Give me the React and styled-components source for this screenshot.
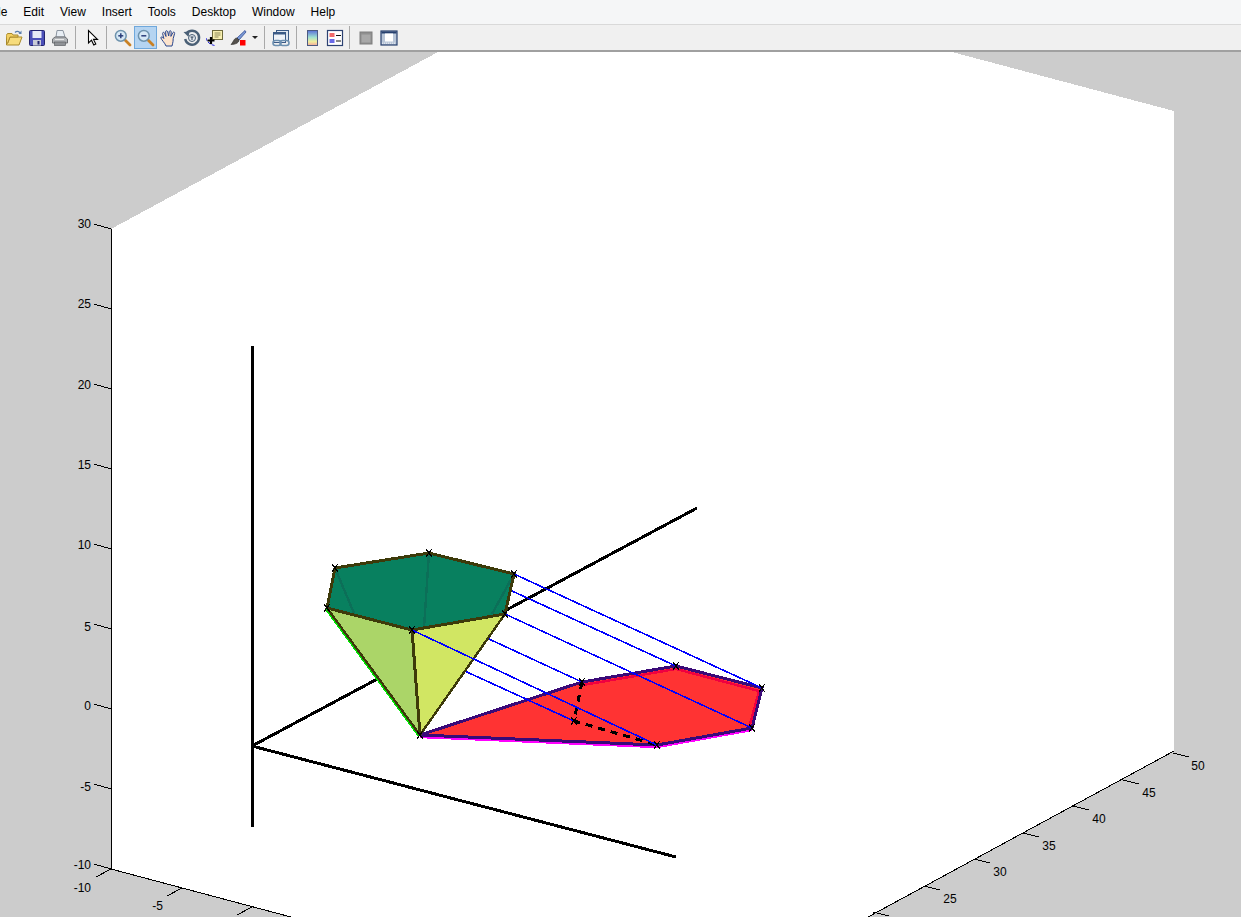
import React from 'react';
import styled, { createGlobalStyle } from 'styled-components';

const GlobalStyle = createGlobalStyle`
    html, body {
        margin: 0;
        padding: 0;
        height: 100%;
        overflow: hidden;
        background: #cccccc;
    }
`;

const Window = styled.div`
    width: 1241px;
    height: 917px;
    display: flex;
    flex-direction: column;
    overflow: hidden;
    font-family: "Liberation Sans", Arial, sans-serif;
`;

const MenuBar = styled.div`
    height: 24px;
    flex: none;
    display: flex;
    align-items: center;
    gap: 16px;
    margin-left: -12px;
    background: #f5f6f7;
    border-bottom: 1px solid #d9d9d9;
`;

const MenuItem = styled.span`
    font-size: 12px;
    line-height: 24px;
    color: #000;
`;

const ToolBar = styled.div`
    height: 25px;
    flex: none;
    display: flex;
    align-items: center;
    padding-left: 2px;
    background: #f0f0f0;
    border-bottom: 2px solid #a0a0a0;
`;

const ToolButton = styled.div`
    width: 23px;
    height: 23px;
    box-sizing: border-box;
    flex: none;
    display: flex;
    align-items: center;
    justify-content: center;
    background: ${p => (p.$active ? '#b5d4f1' : 'transparent')};
    border: 1px solid ${p => (p.$active ? '#6fa8dc' : 'transparent')};
`;

const DropArrow = styled.div`
    width: 0;
    height: 0;
    flex: none;
    margin: 0 2px 0 3px;
    border-left: 3px solid transparent;
    border-right: 3px solid transparent;
    border-top: 3px solid #222;
`;

const Separator = styled.div`
    width: 1px;
    height: 23px;
    flex: none;
    margin-left: ${p => p.$before || 4}px;
    margin-right: ${p => p.$after || 4}px;
    background: #a9a9a9;
`;

const Plot = styled.svg`
    display: block;
    flex: none;
    width: 1241px;
    height: 865px;
`;

const TickLabel = styled.text`
    font-family: "Liberation Sans", Arial, sans-serif;
    font-size: 12px;
    fill: #000;
`;

const Icon = ({ children }) => (
    <svg width="18" height="18" viewBox="0 0 18 18">{children}</svg>
);

const OpenIcon = () => (
    <Icon>
        <path d="M1.5 6V16H14L17 8H5L2.5 14.5" fill="#f7dc7c" stroke="#a98a2c" />
        <path d="M1.5 6L2.5 4.5H7L8 6H13V8H5L2.5 14.5" fill="#f2cf62" stroke="#a98a2c" />
        <path d="M10 3.5C11.5 1.8 14 2 15 4" fill="none" stroke="#5a7fae" strokeWidth="1.2" />
        <path d="M16.5 1.5V5H13.5Z" fill="#5a7fae" />
    </Icon>
);

const SaveIcon = () => (
    <Icon>
        <rect x="1.5" y="1.5" width="15" height="15" rx="1" fill="#4b4fb8" stroke="#23246e" />
        <rect x="4.5" y="2" width="9" height="7" fill="#e6e9f7" />
        <rect x="5" y="11" width="8" height="5.5" fill="#c9cbd6" />
        <rect x="9.5" y="12" width="2" height="3.5" fill="#23246e" />
    </Icon>
);

const PrintIcon = () => (
    <Icon>
        <path d="M5 8L6 1.5H12L14 8Z" fill="#e8eef4" stroke="#8c95a0" />
        <path d="M1.5 10L4 8H14L16.5 10V14H1.5Z" fill="#b2b5b8" stroke="#6c6f73" />
        <rect x="3.5" y="13" width="11" height="3.5" fill="#8f9296" stroke="#5f6266" strokeWidth="0.7" />
        <path d="M4 10.5H13" stroke="#e8e8e8" />
    </Icon>
);

const PointerIcon = () => (
    <Icon>
        <path d="M5.5 1.5V14L8.5 11.2L10.8 16L12.8 15L10.5 10.4H14.5Z" fill="#fff" stroke="#000" strokeWidth="1.1" />
    </Icon>
);

const ZoomIcon = ({ plus }) => (
    <Icon>
        <path d="M10.5 10.5L16 16" stroke="#c98124" strokeWidth="2.8" strokeLinecap="round" />
        <circle cx="6.8" cy="6.8" r="5.4" fill="#d6e8f5" stroke="#6e93ad" strokeWidth="1.5" />
        <path d="M4.3 6.8H9.3" stroke="#2b3f7a" strokeWidth="1.5" />
        {plus && <path d="M6.8 4.3V9.3" stroke="#2b3f7a" strokeWidth="1.5" />}
    </Icon>
);

const HandIcon = () => (
    <Icon>
        <path
            d="M6 17C5 14 1.5 11 0.8 8.8C0.8 7.6 2.5 7.6 3.8 9.5L2.6 4.5C2.4 3.2 4 2.9 4.6 4.2L6 7.5L5.6 2.8C5.6 1.4 7.4 1.3 7.7 2.8L8.7 7L9.3 2.5C9.6 1.3 11.2 1.5 11.2 2.9L10.9 7.4L12.9 3.6C13.6 2.6 15 3.2 14.6 4.5L13.2 9.5L13 12.5C12.8 14 12.3 15.5 12 17Z"
            fill="#fce3cc"
            stroke="#27468f"
        />
    </Icon>
);

const RotateIcon = () => (
    <Icon>
        <path d="M3.5 4.5A7 7 0 1 1 2.2 10" fill="none" stroke="#4a6076" strokeWidth="2.4" />
        <path d="M0.5 3L6.5 2.5L5.5 8Z" fill="#4a6076" />
        <circle cx="9" cy="9" r="3.5" fill="#e3e8ee" stroke="#4a6076" />
        <path d="M7.5 8H10.5M9 8V11" stroke="#2f4054" />
    </Icon>
);

const DataCursorIcon = () => (
    <Icon>
        <rect x="6.5" y="1.5" width="10" height="9" fill="#f7efb0" stroke="#6d6a3c" />
        <path d="M8.5 4H14.5M8.5 6H14.5M8.5 8H12.5" stroke="#8d8a5a" />
        <path d="M0 9C1 13 4 16 9 16.5" fill="none" stroke="#2222dd" strokeDasharray="3 1.5" />
        <path d="M5 8V15M1.5 11.5H8.5" stroke="#000" strokeWidth="2.2" />
    </Icon>
);

const BrushIcon = () => (
    <Icon>
        <path d="M16 1.5L8 9L10 11L17 3Z" fill="#7d9bd6" stroke="#2f4a94" strokeWidth="0.8" />
        <path d="M8 9C5 9 5 12 2 15.5C6 15.5 10 14 10 11Z" fill="#54514c" stroke="#2c2a27" strokeWidth="0.6" />
        <rect x="11" y="11" width="5.5" height="5.5" fill="#f00" />
    </Icon>
);

const LinkIcon = () => (
    <Icon>
        <rect x="4.5" y="1.5" width="12" height="10" fill="#dfe6f0" stroke="#3b5a86" />
        <rect x="1.5" y="3.5" width="12" height="10" fill="#eef2f8" stroke="#3b5a86" />
        <rect x="1.5" y="3.5" width="12" height="2" fill="#3b5a86" />
        <rect x="1" y="11.5" width="8" height="5" rx="2.5" fill="none" stroke="#6d90b0" strokeWidth="1.6" />
        <rect x="8" y="11.5" width="9" height="5" rx="2.5" fill="none" stroke="#6d90b0" strokeWidth="1.6" />
    </Icon>
);

const ColorbarIcon = () => (
    <Icon>
        <defs>
            <linearGradient id="bar-grad" x1="0" y1="0" x2="0" y2="1">
                <stop offset="0" stopColor="#5a6fd8" />
                <stop offset="0.45" stopColor="#9fe0d0" />
                <stop offset="0.75" stopColor="#f2ee9c" />
                <stop offset="1" stopColor="#f0a6a0" />
            </linearGradient>
        </defs>
        <rect x="4.5" y="1.5" width="10" height="15" fill="url(#bar-grad)" stroke="#4c5a80" />
    </Icon>
);

const LegendIcon = () => (
    <Icon>
        <rect x="1.5" y="1.5" width="15" height="15" fill="#fff" stroke="#2c4272" strokeWidth="1.2" />
        <rect x="3.5" y="4" width="5" height="4" fill="#f06a6a" />
        <rect x="3.5" y="10" width="5" height="4" fill="#6a6ae8" />
        <path d="M10 6.5H15M10 12H15" stroke="#111" />
    </Icon>
);

const HideIcon = () => (
    <Icon>
        <rect x="3" y="3" width="12" height="12" fill="#8f8f8f" stroke="#7e7e7e" />
        <rect x="4.5" y="5.5" width="9" height="8" fill="#a8a8a8" />
    </Icon>
);

const ShowIcon = () => (
    <Icon>
        <rect x="1" y="2" width="16" height="14" fill="#b9c6d8" stroke="#27406e" strokeWidth="1.2" />
        <rect x="1.5" y="2.5" width="15" height="2" fill="#27406e" />
        <rect x="5" y="4.5" width="8" height="8" fill="#fff" />
        <path d="M2 14.2H16" stroke="#eef1f5" strokeDasharray="1 1" />
    </Icon>
);

const menus = ['File', 'Edit', 'View', 'Insert', 'Tools', 'Desktop', 'Window', 'Help'];

const zTicks = [
    ['30', 229, 228], ['25', 309, 308], ['20', 389, 389], ['15', 469, 469], ['10', 549, 549],
    ['5', 629, 631], ['0', 709, 710], ['-5', 789, 791], ['-10', 869, 869],
];

const xTicks = [
    { x: 111, y: 869, label: '-10', lx: 91, ly: 892 },
    { x: 182, y: 888, label: '-5', lx: 163, ly: 910 },
    { x: 252, y: 907 },
];

const yTicks = [
    ['50', 1173, 753, 1198], ['45', 1123, 780, 1149], ['40', 1073, 806, 1099],
    ['35', 1023, 833, 1049], ['30', 974, 859, 1000], ['25', 924, 886, 950], [null, 873, 912, 0],
];

// prism corners
const top = [[327, 608], [335, 568], [429, 553], [514, 574], [505, 614], [412, 630]];
const apex = [420, 735];
const shadow = [[420, 735], [582, 682], [676, 666], [762, 688], [752, 728], [657, 745]];

const pts = list => list.map(p => p.join(',')).join(' ');

const Cross = ({ x, y, color = '#000' }) => (
    <path d={`M${x - 3} ${y - 4}L${x + 3} ${y + 4}M${x + 3} ${y - 4}L${x - 3} ${y + 4}`} stroke={color} strokeWidth="1" fill="none" />
);

const Chart = () => (
    <Plot viewBox="0 52 1241 865" shapeRendering="crispEdges">
        <rect x="0" y="52" width="1241" height="865" fill="#cccccc" />
        <polygon points="111,229 438,52 952,52 1174,111 1174,751 868,917 291,917 111,869" fill="#fff" />

        <path d="M111 229V869L291 917M868 917L1174 751" stroke="#000" fill="none" />
        {zTicks.map(([label, y, ly]) => (
            <g key={label}>
                <line x1="94" y1={y - 5} x2="111" y2={y} stroke="#000" />
                <TickLabel x="91" y={ly} textAnchor="end">{label}</TickLabel>
            </g>
        ))}
        {xTicks.map(t => (
            <g key={t.x}>
                <line x1={t.x} y1={t.y} x2={t.x - 15} y2={t.y + 8} stroke="#000" />
                {t.label && <TickLabel x={t.lx} y={t.ly} textAnchor="end">{t.label}</TickLabel>}
            </g>
        ))}
        {yTicks.map(([label, x, y, lx]) => (
            <g key={x}>
                <line x1={x} y1={y} x2={x + 16} y2={y + 4} stroke="#000" />
                {label && <TickLabel x={lx} y={y + 17} textAnchor="middle">{label}</TickLabel>}
            </g>
        ))}

        <path d="M252 346V827M252 746L697 508M252 746L676 857" stroke="#000" strokeWidth="3" fill="none" />

        <polygon points={pts(shadow)} fill="#ff3333" />
        <polyline points="420,737 657,747 752,730" stroke="#ff00ff" strokeWidth="2.4" fill="none" />
        <polyline points="583,685 676,669 759,691 749,728" stroke="#f00040" strokeWidth="2.4" fill="none" />
        <polygon points={pts(shadow)} fill="none" stroke="#3a0a78" strokeWidth="3" />
        <path d="M582 682L574 721L657 745" stroke="#000" strokeWidth="3" strokeDasharray="7 6" fill="none" />

        <path d="M335 568L582 682M327 608L574 721M429 553L676 666M514 574L762 688M505 614L752 728" stroke="#0000ff" strokeWidth="1.6" fill="none" />

        <polygon points={pts(top)} fill="#08805f" />
        <path d="M429 553L424 628M335 568L356 618M514 574L492 614" stroke="#0c6f58" strokeWidth="2.4" fill="none" />
        <polygon points="327,608 412,630 420,735" fill="#abd568" />
        <polygon points="412,630 505,614 420,735" fill="#d1e663" />
        <path d="M326 609L419 736" stroke="#00e000" strokeWidth="2.4" fill="none" />
        <polygon points={pts(top)} fill="none" stroke="#3d3a0a" strokeWidth="3" />
        <path d={`M327 608L${apex}M505 614L${apex}`} stroke="#3d3a0a" strokeWidth="2.4" fill="none" />
        <path d={`M412 630L${apex}`} stroke="#3d3a0a" strokeWidth="3" fill="none" />

        <path d="M412 630L657 745" stroke="#0000ff" strokeWidth="1.6" fill="none" />

        {top.concat([apex]).concat(shadow.slice(1)).map(([x, y]) => <Cross key={`${x}-${y}`} x={x} y={y} />)}
        <Cross x={574} y={721} />
    </Plot>
);

const App = () => (
    <Window>
        <GlobalStyle />
        <MenuBar>
            {menus.map(m => <MenuItem key={m}>{m}</MenuItem>)}
        </MenuBar>
        <ToolBar>
            <ToolButton><OpenIcon /></ToolButton>
            <ToolButton><SaveIcon /></ToolButton>
            <ToolButton><PrintIcon /></ToolButton>
            <Separator />
            <ToolButton><PointerIcon /></ToolButton>
            <Separator $before={3} />
            <ToolButton><ZoomIcon plus /></ToolButton>
            <ToolButton $active><ZoomIcon /></ToolButton>
            <ToolButton><HandIcon /></ToolButton>
            <ToolButton><RotateIcon /></ToolButton>
            <ToolButton><DataCursorIcon /></ToolButton>
            <ToolButton><BrushIcon /></ToolButton>
            <DropArrow />
            <Separator />
            <ToolButton><LinkIcon /></ToolButton>
            <Separator $after={3} />
            <ToolButton><ColorbarIcon /></ToolButton>
            <ToolButton><LegendIcon /></ToolButton>
            <Separator $before={3} />
            <ToolButton><HideIcon /></ToolButton>
            <ToolButton><ShowIcon /></ToolButton>
        </ToolBar>
        <Chart />
    </Window>
);

export default App;
